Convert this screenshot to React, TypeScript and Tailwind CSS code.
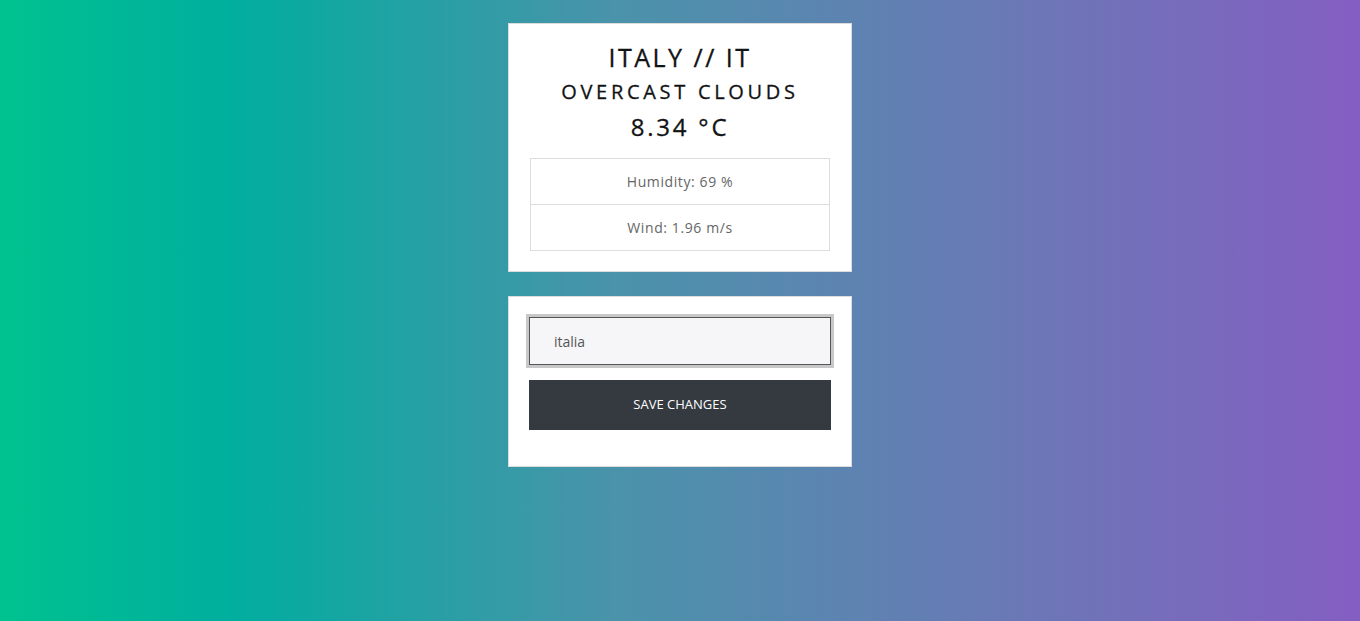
export default function App() {
  return (
    <div className="flex min-h-[621px] w-full flex-col items-center bg-[linear-gradient(to_right,#00c28f_0%,#00ae9e_17%,#4a93aa_45%,#6b78b6_75%,#845ec2_100%)] pt-[23px] font-['Open_Sans','Noto_Sans',sans-serif]">
      <div className="w-[344px] border border-[#dcdcdc] bg-white px-[21px] pb-[20px] pt-[16px] text-center text-[#111315]">
        <h1 className="text-[25px] leading-[34px] tracking-[2.5px] [-webkit-text-stroke:0.3px_#111315]">ITALY // IT</h1>
        <h2 className="text-[20px] leading-[35px] tracking-[3.7px] [-webkit-text-stroke:0.3px_#111315]">OVERCAST CLOUDS</h2>
        <p className="text-[24px] leading-[36px] tracking-[2.8px] [-webkit-text-stroke:0.3px_#111315]">8.34 °C</p>
        <div className="mt-[13px] border border-[#dddddd] text-[14px] tracking-[0.6px] text-[#666]">
          <div className="flex h-[46px] items-center justify-center border-b border-[#dddddd]">Humidity: 69 %</div>
          <div className="flex h-[45px] items-center justify-center">Wind: 1.96 m/s</div>
        </div>
      </div>

      <div className="mt-[24px] w-[344px] border border-[#dcdcdc] bg-white px-[20px] pb-[36px] pt-[20px]">
        <input
          defaultValue="italia"
          className="block h-[48px] w-full border border-[#555] bg-[#f6f6f8] px-[24px] text-[14px] text-[#555] outline-none ring-[3px] ring-[#c8c8c8]"
        />
        <button className="mt-[15px] h-[50px] w-full bg-[#343a40] text-[13px] text-white">SAVE CHANGES</button>
      </div>
    </div>
  );
}
